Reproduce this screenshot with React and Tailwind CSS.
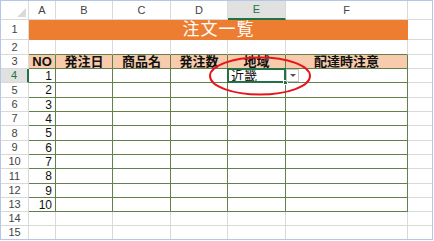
import React from 'react';

const GRAY = 'border-[#d9d9d9]';
const cols = [
  { key: 'A', w: 'w-[27px]' },
  { key: 'B', w: 'w-[57px]' },
  { key: 'C', w: 'w-[58px]' },
  { key: 'D', w: 'w-[57px]' },
  { key: 'E', w: 'w-[58px]' },
  { key: 'F', w: 'w-[122px]' },
];
const heads = ['NO', '発注日', '商品名', '発注数', '地域', '配達時注意'];
const dataHeights = ['h-[14px]', 'h-[15px]', 'h-[14px]', 'h-[14px]', 'h-[15px]', 'h-[14px]', 'h-[14px]', 'h-[15px]', 'h-[14px]', 'h-[14px]'];

const RowHead = ({ n, active }) => (
  <div
    className={`w-[28px] shrink-0 flex items-center justify-center text-[11px] border-r border-b ${GRAY} ${
      active ? 'bg-[#e1e1e1] text-[#217346] border-r-2 border-r-[#217346]' : 'text-[#444]'
    }`}
  >
    {n}
  </div>
);

const Filler = () => <div className={`flex-1 border-b ${GRAY}`} />;

const App = () => {
  return (
    <div className="w-[434px] h-[241px] bg-white overflow-hidden" style={{ fontFamily: '"Liberation Sans", "Noto Sans CJK JP", sans-serif' }}>
      <div className="relative w-[433px] h-[240px] border border-[#b4c7e7] overflow-hidden flex flex-col">
        {/* column letters */}
        <div className="flex h-[19px] shrink-0">
          <div className={`relative w-[28px] shrink-0 border-r border-b ${GRAY}`}>
            <div className="absolute right-[2px] bottom-[2px] w-0 h-0 border-l-[9px] border-l-transparent border-b-[9px] border-b-[#dadada]" />
          </div>
          {cols.map((c) => (
            <div
              key={c.key}
              className={`${c.w} shrink-0 flex items-center justify-center text-[11px] border-r ${GRAY} ${
                c.key === 'E' ? 'bg-[#e1e1e1] text-[#217346] border-b-2 border-b-[#217346]' : `text-[#444] border-b`
              }`}
            >
              {c.key}
            </div>
          ))}
          <Filler />
        </div>

        {/* row 1 title */}
        <div className="flex h-[20px] shrink-0">
          <RowHead n={1} />
          <div className="w-[379px] shrink-0 bg-[#ed7d31] flex items-center justify-center text-white text-[17px] tracking-[1px]">
            注文一覧
          </div>
          <Filler />
        </div>

        {/* row 2 */}
        <div className="flex h-[15px] shrink-0">
          <RowHead n={2} />
          {cols.map((c) => (
            <div key={c.key} className={`${c.w} shrink-0 border-r ${GRAY} border-b border-b-[#62804a]`} />
          ))}
          <Filler />
        </div>

        {/* row 3 headings */}
        <div className="flex h-[14px] shrink-0">
          <RowHead n={3} />
          {cols.map((c, i) => (
            <div
              key={c.key}
              className={`${c.w} shrink-0 bg-[#f8cbad] border-r border-b border-[#62804a] flex items-center justify-center text-[13px] font-bold text-[#111] leading-none whitespace-nowrap overflow-hidden`}
            >
              {heads[i]}
            </div>
          ))}
          <Filler />
        </div>

        {/* data rows */}
        {dataHeights.map((h, r) => (
          <div key={r} className={`flex ${h} shrink-0`}>
            <RowHead n={r + 4} active={r === 0} />
            {cols.map((c) => (
              <div
                key={c.key}
                className={`${c.w} shrink-0 border-r border-b border-[#62804a] text-[12px] leading-none flex items-center ${
                  c.key === 'A' ? 'justify-end pr-[3px] text-[#111]' : ''
                } ${c.key === 'E' && r === 0 ? 'relative' : ''}`}
              >
                {c.key === 'A' && r + 1}
                {c.key === 'E' && r === 0 && (
                  <>
                    <div className="absolute -left-[1px] -top-[1px] -right-[1px] -bottom-[1px] border-2 border-[#217346]" />
                    <div className="absolute -right-[3px] -bottom-[3px] w-[5px] h-[5px] bg-[#217346] border border-white" />
                    <span className="pl-[3px] text-[13px] text-[#111]">近畿</span>
                    <div className="absolute -right-[14px] top-[0px] w-[13px] h-[13px] bg-white border border-[#c6c6c6] flex items-center justify-center">
                      <div className="w-0 h-0 border-l-[3px] border-r-[3px] border-t-[3px] border-l-transparent border-r-transparent border-t-[#555]" />
                    </div>
                  </>
                )}
              </div>
            ))}
            <Filler />
          </div>
        ))}

        {/* rows 14, 15 */}
        {[14, 15].map((n) => (
          <div key={n} className="flex h-[14px] shrink-0">
            <RowHead n={n} />
            {cols.map((c) => (
              <div key={c.key} className={`${c.w} shrink-0 border-r border-b ${GRAY}`} />
            ))}
            <Filler />
          </div>
        ))}

        {/* red ellipse */}
        <svg className="absolute left-[207px] top-[54px] pointer-events-none" width="104" height="42" viewBox="0 0 104 42">
          <ellipse cx="52" cy="21" rx="50" ry="18.5" fill="none" stroke="#e8141c" strokeWidth="2" />
        </svg>
      </div>
    </div>
  );
};

export default App;
